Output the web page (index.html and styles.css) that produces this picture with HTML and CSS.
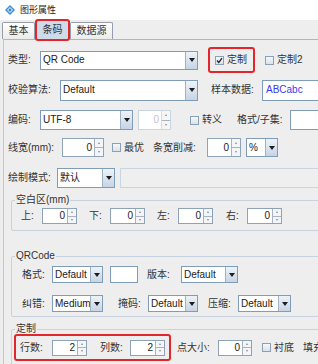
FILE: index.html
```html
<!DOCTYPE html>
<html lang="zh-CN">
<head>
  <meta charset="UTF-8">
  <title>图形属性</title>
  <link rel="stylesheet" href="styles.css">
</head>
<body>
  <!-- Title bar -->
  <div class="titlebar">
    <svg class="logo" width="10" height="10" viewBox="0 0 10 10">
      <path d="M5 0 L10 5 L5 10 L0 5Z" fill="#3d8ad6"/>
      <path d="M5 1.8 L8.2 5 L5 8.2 L1.8 5Z" fill="#a9d6f7"/>
      <path d="M5 3.6 L6.4 5 L5 6.4 L3.6 5Z" fill="#2f74c0"/>
    </svg>
    <span class="title">图形属性</span>
  </div>

  <!-- Tabs -->
  <div class="tabs">
    <div class="tab">基本</div>
    <div class="tab active">条码</div>
    <div class="tab">数据源</div>
  </div>

  <div class="panel">
    <div class="row r1">
      <span class="lbl w32">类型:</span>
      <div class="combo w158"><span class="val">QR Code</span><span class="arrow"></span></div>
      <div class="mark check-wrap ml10">
        <span class="cb on"><svg width="7" height="7" viewBox="0 0 7 7"><path d="M1 3.5 L2.8 5.5 L6 1.2" fill="none" stroke="#222" stroke-width="1.3"/></svg></span>定制
      </div>
      <span class="cb ml10"></span><span class="txt">定制2</span>
    </div>

    <div class="row r2">
      <span class="lbl w52">校验算法:</span>
      <div class="combo w138"><span class="val">Default</span><span class="arrow"></span></div>
      <span class="lbl w51 ml13">样本数据:</span>
      <div class="field w80 sample">ABCabc</div>
    </div>

    <div class="row r3">
      <span class="lbl w32">编码:</span>
      <div class="combo w93"><span class="val">UTF-8</span><span class="arrow"></span></div>
      <div class="spin w33 ml5 off"><span class="num">0</span><span class="btns"><i class="up"></i><i class="dn"></i></span></div>
      <span class="cb ml19"></span><span class="txt">转义</span>
      <span class="lbl w53 ml15">格式/子集:</span>
      <div class="field w60"></div>
    </div>

    <div class="row r4">
      <span class="lbl w54">线宽(mm):</span>
      <div class="spin w42"><span class="num">0</span><span class="btns"><i class="up"></i><i class="dn"></i></span></div>
      <span class="cb ml8"></span><span class="txt">最优</span>
      <span class="lbl w54 ml9">条宽削减:</span>
      <div class="spin w34"><span class="num">0</span><span class="btns"><i class="up"></i><i class="dn"></i></span></div>
      <div class="combo w32 ml5"><span class="val">%</span><span class="arrow"></span></div>
    </div>

    <div class="row r5">
      <span class="lbl w49">绘制模式:</span>
      <div class="combo w58"><span class="val">默认</span><span class="arrow"></span></div>
      <div class="field w210 ml5 off"></div>
    </div>

    <fieldset class="group g1">
      <legend>空白区(mm)</legend>
      <div class="row gr">
        <span class="lbl w21">上:</span>
        <div class="spin w35"><span class="num">0</span><span class="btns"><i class="up"></i><i class="dn"></i></span></div>
        <span class="lbl w21 ml12">下:</span>
        <div class="spin w35"><span class="num">0</span><span class="btns"><i class="up"></i><i class="dn"></i></span></div>
        <span class="lbl w21 ml12">左:</span>
        <div class="spin w35"><span class="num">0</span><span class="btns"><i class="up"></i><i class="dn"></i></span></div>
        <span class="lbl w21 ml13">右:</span>
        <div class="spin w35"><span class="num">0</span><span class="btns"><i class="up"></i><i class="dn"></i></span></div>
      </div>
    </fieldset>

    <fieldset class="group g2">
      <legend>QRCode</legend>
      <div class="row qr1">
        <span class="lbl w30">格式:</span>
        <div class="combo w51"><span class="val">Default</span><span class="arrow"></span></div>
        <div class="field w28 ml7"></div>
        <span class="lbl w34 ml9">版本:</span>
        <div class="combo w57"><span class="val">Default</span><span class="arrow"></span></div>
      </div>
      <div class="row qr2">
        <span class="lbl w30">纠错:</span>
        <div class="combo w51"><span class="val">Medium</span><span class="arrow"></span></div>
        <span class="lbl w30 ml15">掩码:</span>
        <div class="combo w50"><span class="val">Default</span><span class="arrow"></span></div>
        <span class="lbl w30 ml10">压缩:</span>
        <div class="combo w53"><span class="val">Default</span><span class="arrow"></span></div>
      </div>
    </fieldset>

    <fieldset class="group g3">
      <legend>定制</legend>
      <div class="row cr">
        <div class="mark grid-wrap">
          <span class="lbl w32">行数:</span>
          <div class="spin w35"><span class="num">2</span><span class="btns"><i class="up"></i><i class="dn"></i></span></div>
          <span class="lbl w30 ml13">列数:</span>
          <div class="spin w35"><span class="num">2</span><span class="btns"><i class="up"></i><i class="dn"></i></span></div>
        </div>
        <span class="lbl w41 ml6">点大小:</span>
        <div class="spin w34"><span class="num">0</span><span class="btns"><i class="up"></i><i class="dn"></i></span></div>
        <span class="cb ml10"></span><span class="txt">衬底</span>
        <span class="txt ml9">填充</span>
      </div>
    </fieldset>
  </div>
</body>
</html>
```

FILE: styles.css
```css
:root {
  --bg: #eeeeee;
  --line: #c6d2df;
  --edge: #7f9db9;
  --red: #e3262b;
  --text: #333333;
}

* {
  margin: 0;
  padding: 0;
  box-sizing: border-box;
}

body {
  width: 318px;
  height: 364px;
  overflow: hidden;
  background: var(--bg);
  color: var(--text);
  font: 10px/12px "Liberation Sans", "Noto Sans CJK SC", sans-serif;
}

/* Title bar */
.titlebar {
  height: 20px;
  background: #fff;
  display: flex;
  align-items: center;
  padding-left: 5px;
  gap: 5px;
}

.title {
  font-size: 9px;
  color: #222;
}

/* Tabs */
.tabs {
  display: flex;
  align-items: flex-end;
  height: 19px;
  padding-left: 2px;
  gap: 1px;
  position: relative;
  z-index: 1;
}

.tab {
  height: 17px;
  line-height: 16px;
  padding: 0 5.5px;
  border: 1px solid #959ea8;
  border-bottom: none;
  border-radius: 2px 2px 0 0;
  background: linear-gradient(#ffffff, #ebebeb);
  color: #333;
}

.tab.active {
  height: 20px;
  line-height: 18px;
  margin-bottom: -1px;
  background: #cddbea;
  outline: 2px solid var(--red);
  outline-offset: -1px;
  border-radius: 2px;
}

/* Panel */
.panel {
  margin-left: 3px;
  height: 325px;
  border-top: 1px solid #a3b8d3;
  border-left: 1px solid #b9c8da;
  padding-left: 4px;
  padding-top: 1px;
}

.row {
  display: flex;
  align-items: center;
  white-space: nowrap;
}

.r1 { height: 26px; margin-top: 6px; }
.r2 { height: 22px; margin-top: 6px; }
.r3 { height: 20px; margin-top: 9px; }
.r4 { height: 19px; margin-top: 8px; }
.r5 { height: 20px; margin-top: 11px; }

.r1 .combo { height: 19px; }
.r2 .combo, .r2 .field { height: 21px; }
.r3 .combo, .r3 .field, .r3 .spin { height: 20px; }
.r4 .combo, .r4 .spin { height: 19px; }
.r5 .combo, .r5 .field { height: 20px; }

.lbl, .txt {
  flex: none;
}

/* Combo box */
.combo {
  flex: none;
  display: flex;
  border: 1px solid var(--edge);
  background: #fff;
  color: #222;
}

.combo .val {
  flex: 1;
  padding-left: 2px;
  display: flex;
  align-items: center;
  overflow: hidden;
}

.combo .arrow {
  width: 12px;
  flex: none;
  border-left: 1px solid #9fb2c8;
  background: linear-gradient(#eef3f9, #c6d4e4);
  display: flex;
  align-items: center;
  justify-content: center;
}

.combo .arrow::after {
  content: "";
  border-left: 3.5px solid transparent;
  border-right: 3.5px solid transparent;
  border-top: 4px solid #1d1d1d;
}

/* Text field */
.field {
  flex: none;
  border: 1px solid var(--edge);
  background: #fff;
  display: flex;
  align-items: center;
  padding-left: 3px;
}

.field.sample {
  color: #3a3ae6;
}

.field.off {
  border-color: #c9d5e2;
  background: #efefef;
}

/* Spinner */
.spin {
  flex: none;
  display: flex;
  border: 1px solid #8fa3b8;
  background: #fff;
  color: #222;
}

.spin .num {
  flex: 1;
  text-align: right;
  padding-right: 2px;
  display: flex;
  align-items: center;
  justify-content: flex-end;
}

.spin .btns {
  width: 9px;
  flex: none;
  display: flex;
  flex-direction: column;
  border-left: 1px solid #a7b3c1;
}

.spin .btns i {
  flex: 1;
  background: #f3f5f8;
  display: flex;
  align-items: center;
  justify-content: center;
}

.spin .btns i + i {
  border-top: 1px solid #a7b3c1;
}

.spin .btns .up::after {
  content: "";
  border-left: 1.5px solid transparent;
  border-right: 1.5px solid transparent;
  border-bottom: 2px solid #8a8a8a;
}

.spin .btns .dn::after {
  content: "";
  border-left: 1.5px solid transparent;
  border-right: 1.5px solid transparent;
  border-top: 2px solid #8a8a8a;
}

.spin.off {
  border-color: #c9d5e2;
}

.spin.off .num {
  color: #c4c4c4;
}

.spin.off .btns {
  border-left-color: #d3dbe4;
}

.spin.off .btns i {
  background: #f6f6f6;
}

/* Checkbox */
.cb {
  flex: none;
  width: 9px;
  height: 9px;
  margin-right: 3px;
  border: 1px solid #8aa0b8;
  background: linear-gradient(#f6f8fa, #dbe2ea);
  display: flex;
  align-items: center;
  justify-content: center;
}

/* Red highlight boxes */
.mark {
  flex: none;
  display: flex;
  align-items: center;
  border: 2px solid var(--red);
  border-radius: 3px;
}

.check-wrap {
  height: 26px;
  padding: 0 6px 0 5px;
}

.grid-wrap {
  height: 27px;
  padding: 0 4px;
}

/* Groups */
.group {
  width: 340px;
  margin-left: 3px;
  border: 1px solid var(--line);
  border-radius: 2px;
  padding: 0;
}

.group legend {
  margin-left: 3px;
  padding: 0 1px;
  line-height: 12px;
  color: #333;
}

.g1 { margin-top: 6px; padding-bottom: 6px; }
.g1 .gr { height: 16px; margin-top: 2px; padding-left: 9px; }
.g1 .spin { height: 16px; }

.g2 { margin-top: 19px; padding-bottom: 4px; }
.g2 .row { padding-left: 10px; height: 17px; }
.g2 .qr1 { margin-top: 4px; }
.g2 .qr2 { margin-top: 12px; }
.g2 .combo, .g2 .field { height: 17px; }

.g3 { margin-top: 6px; padding-bottom: 6px; }
.g3 .cr { padding-left: 2px; height: 27px; margin-top: -1px; }
.g3 .spin { height: 16px; }

/* Sizes */
.w21 { width: 21px; }
.w28 { width: 28px; }
.w30 { width: 30px; }
.w32 { width: 32px; }
.w33 { width: 33px; }
.w34 { width: 34px; }
.w35 { width: 35px; }
.w41 { width: 41px; }
.w42 { width: 42px; }
.w49 { width: 49px; }
.w50 { width: 50px; }
.w51 { width: 51px; }
.w52 { width: 52px; }
.w53 { width: 53px; }
.w54 { width: 54px; }
.w57 { width: 57px; }
.w58 { width: 58px; }
.w60 { width: 60px; }
.w80 { width: 80px; }
.w93 { width: 93px; }
.w138 { width: 138px; }
.w158 { width: 158px; }
.w210 { width: 210px; }

.ml5 { margin-left: 5px; }
.ml6 { margin-left: 6px; }
.ml7 { margin-left: 7px; }
.ml8 { margin-left: 8px; }
.ml9 { margin-left: 9px; }
.ml10 { margin-left: 10px; }
.ml12 { margin-left: 12px; }
.ml13 { margin-left: 13px; }
.ml15 { margin-left: 15px; }
.ml19 { margin-left: 19px; }
```
